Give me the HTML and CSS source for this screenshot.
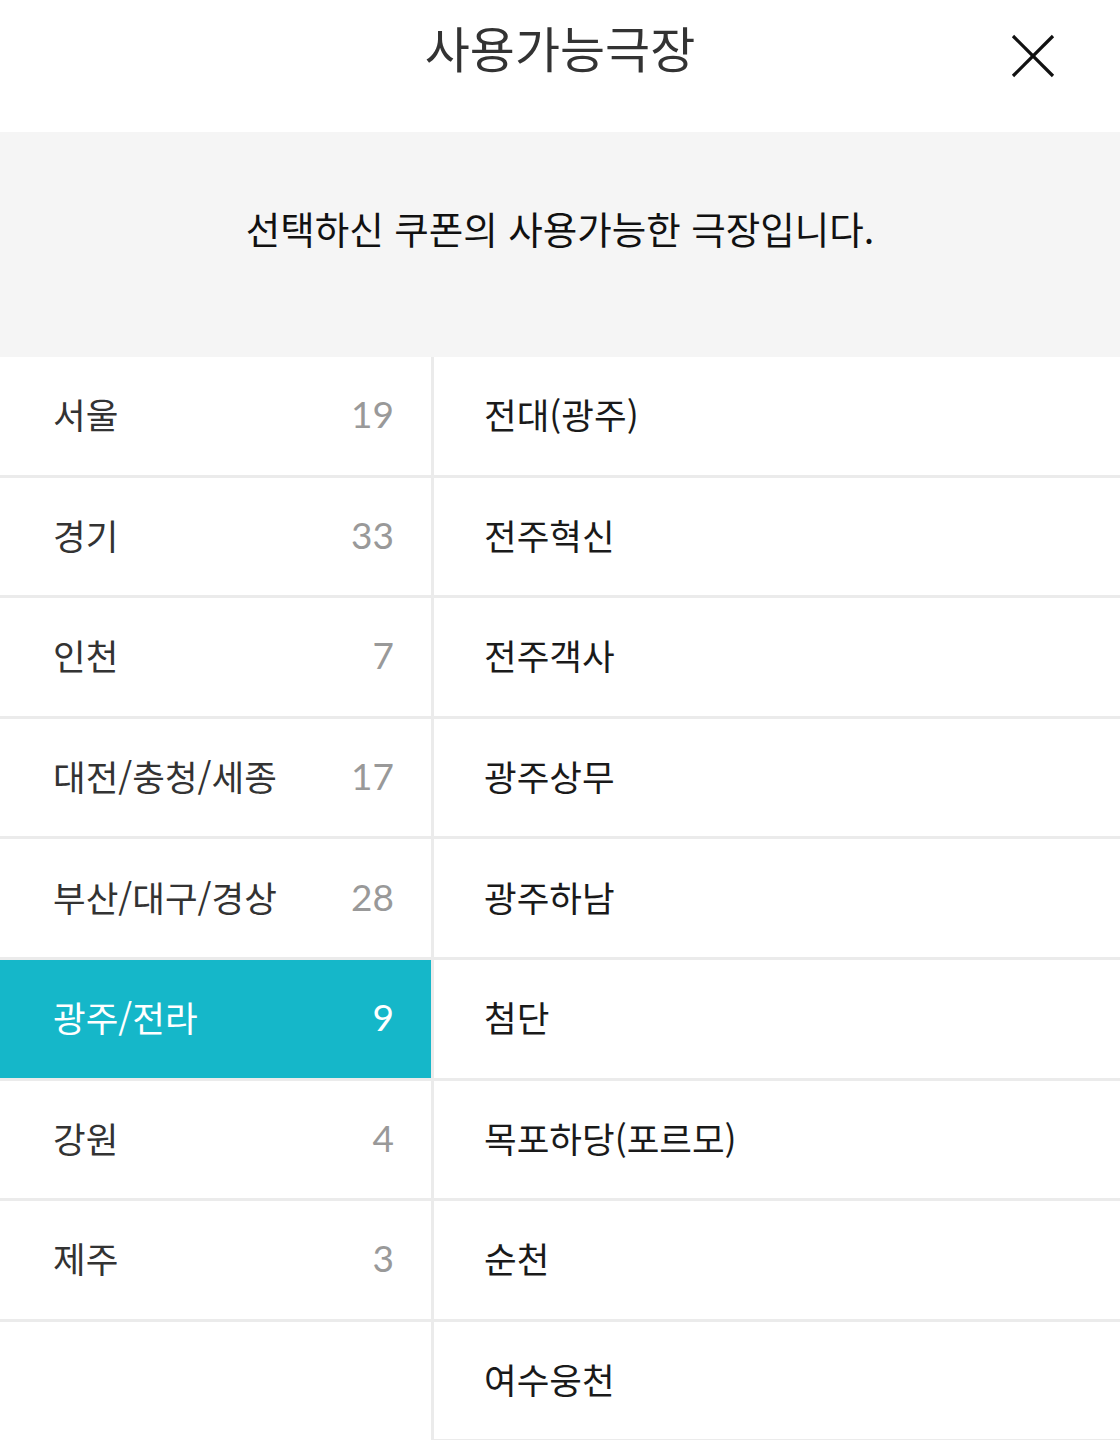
FILE: index.html
```html
<!DOCTYPE html>
<html lang="ko">

<head>
    <meta charset="UTF-8">
    <meta name="viewport" content="width=device-width, initial-scale=1.0">
    <title>사용가능극장</title>
    <link rel="stylesheet" href="styles.css">
</head>

<body>

    <!-- Header -->
    <header class="header">
        <span></span>
        <h1 class="title">사용가능극장</h1>
        <button class="close" type="button" aria-label="닫기">
            <svg width="44" height="44" viewBox="0 0 44 44">
                <line x1="2" y1="2" x2="42" y2="42" stroke="#111" stroke-width="3.2" />
                <line x1="42" y1="2" x2="2" y2="42" stroke="#111" stroke-width="3.2" />
            </svg>
        </button>
    </header>

    <!-- Notice -->
    <div class="notice">선택하신 쿠폰의 사용가능한 극장입니다.</div>

    <!-- Lists -->
    <div class="lists">
        <ul class="region-list">
            <li class="region"><span class="name">서울</span><span class="count">19</span></li>
            <li class="region"><span class="name">경기</span><span class="count">33</span></li>
            <li class="region"><span class="name">인천</span><span class="count">7</span></li>
            <li class="region"><span class="name">대전/충청/세종</span><span class="count">17</span></li>
            <li class="region"><span class="name">부산/대구/경상</span><span class="count">28</span></li>
            <li class="region active"><span class="name">광주/전라</span><span class="count">9</span></li>
            <li class="region"><span class="name">강원</span><span class="count">4</span></li>
            <li class="region"><span class="name">제주</span><span class="count">3</span></li>
        </ul>

        <ul class="theater-list">
            <li class="theater">전대(광주)</li>
            <li class="theater">전주혁신</li>
            <li class="theater">전주객사</li>
            <li class="theater">광주상무</li>
            <li class="theater">광주하남</li>
            <li class="theater">첨단</li>
            <li class="theater">목포하당(포르모)</li>
            <li class="theater">순천</li>
            <li class="theater">여수웅천</li>
        </ul>
    </div>

</body>

</html>
```

FILE: styles.css
```css
/* Reset */
* {
    margin: 0;
    padding: 0;
    box-sizing: border-box;
}

body {
    width: 1120px;
    height: 1440px;
    overflow: hidden;
    background: #fff;
    font-family: "Noto Sans CJK KR", "Noto Sans", sans-serif;
}

/* Header */
.header {
    height: 132px;
    display: grid;
    grid-template-columns: 1fr auto 1fr;
    align-items: start;
}

.title {
    padding-top: 21px;
    font-size: 49px;
    line-height: 52px;
    font-weight: 400;
    color: #333;
}

.close {
    justify-self: end;
    margin-top: 34px;
    margin-right: 65px;
    width: 44px;
    height: 44px;
    border: none;
    background: none;
    cursor: pointer;
}

.close svg {
    display: block;
}

/* Notice */
.notice {
    height: 225px;
    background: #f5f5f5;
    display: flex;
    justify-content: center;
    align-items: center;
    font-size: 37.5px;
    color: #111;
    padding-bottom: 34px;
}

/* Lists */
.lists {
    display: flex;
}

.region-list,
.theater-list {
    list-style: none;
}

.region-list {
    width: 434px;
    border-right: 3px solid #ebebeb;
}

.theater-list {
    flex: 1;
}

.region,
.theater {
    height: 120.6px;
    border-bottom: 3px solid #ebebeb;
    display: flex;
    align-items: center;
    font-size: 35.5px;
    padding-bottom: 4px;
}

.region {
    justify-content: space-between;
    padding-left: 53px;
    padding-right: 37px;
    color: #333;
}

.region .count {
    font-family: Lato, "Noto Sans", sans-serif;
    font-size: 37px;
    color: #999;
}

.region.active {
    background: #15b7c9;
    color: #fff;
}

.region.active .count {
    color: #fff;
}

.theater {
    padding-left: 50px;
    color: #1a1a1a;
}
```
